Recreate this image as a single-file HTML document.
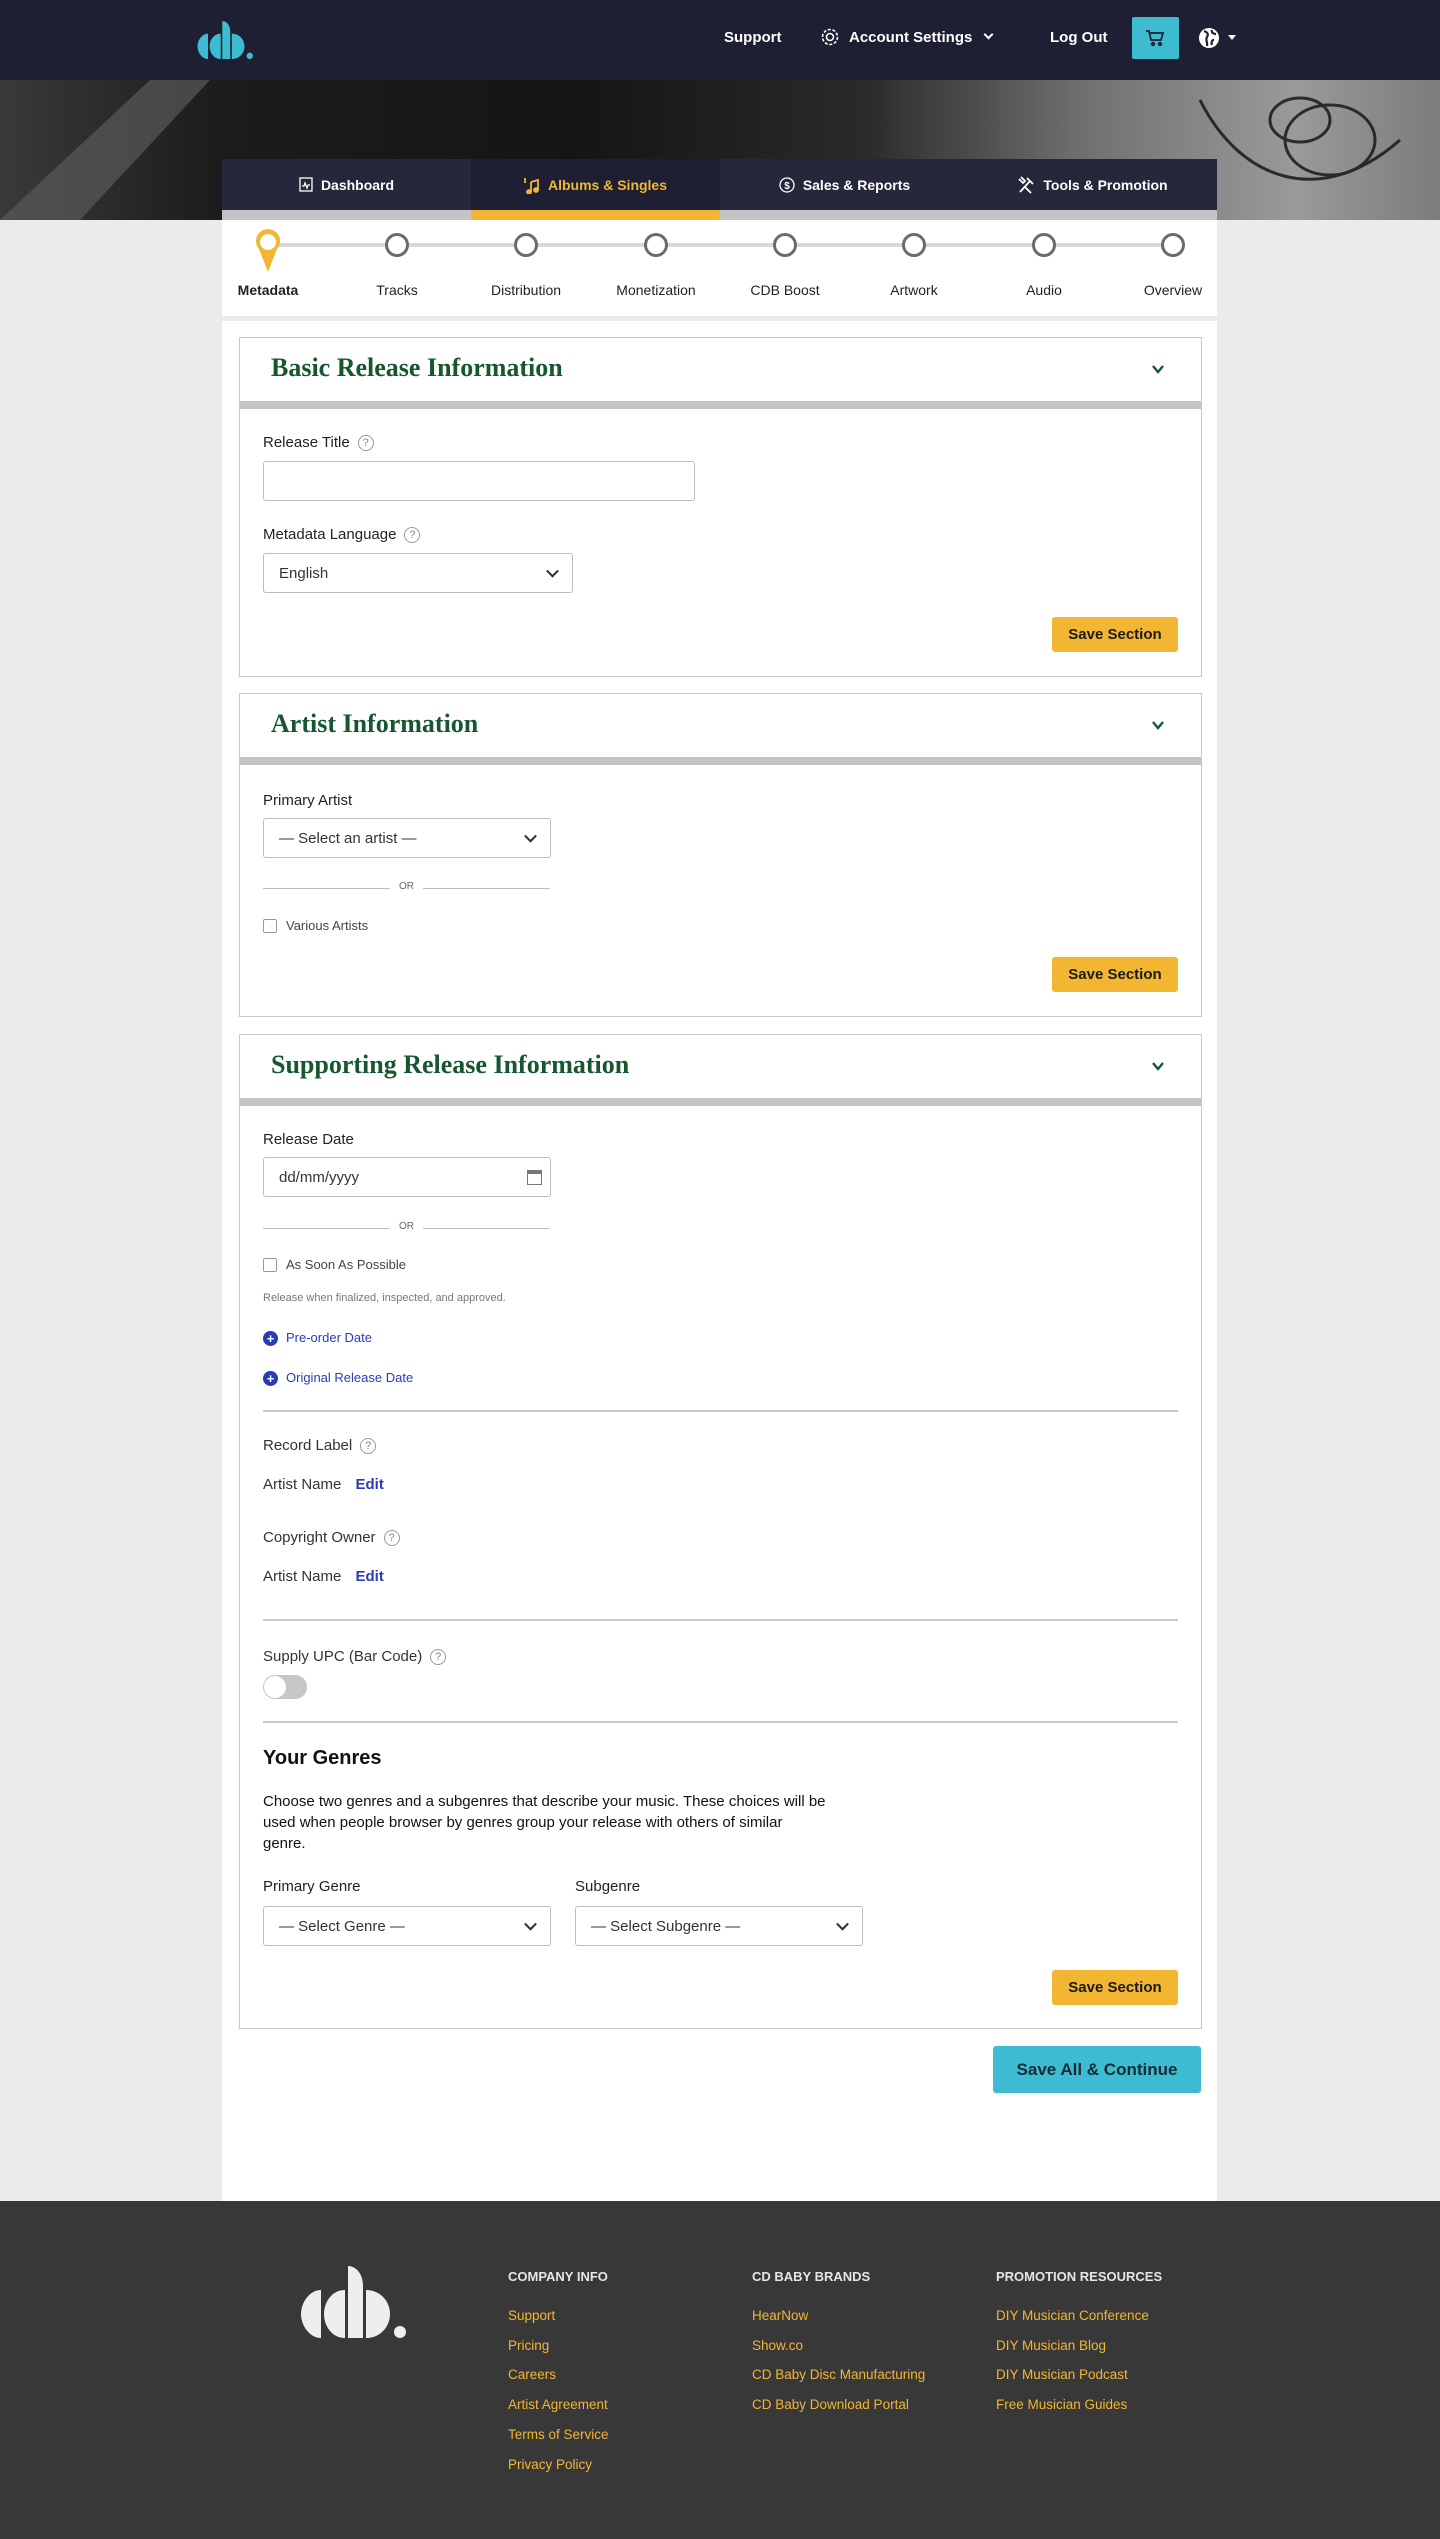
<!DOCTYPE html>
<html><head><meta charset="utf-8">
<style>
*{box-sizing:border-box;margin:0;padding:0}
body{width:1440px;height:2539px;position:relative;background:#ebebeb;font-family:"Liberation Sans",Arial,sans-serif;color:#222;overflow:hidden}
.a{position:absolute}
.hdr{left:0;top:0;width:1440px;height:80px;background:#1f1f33}
.nav{color:#fff;font-size:15px;font-weight:bold;top:29px}
.hero{left:0;top:80px;width:1440px;height:140px;background:linear-gradient(90deg,#3a3a3a 0%,#1c1c1c 15%,#151515 40%,#2a2a2a 60%,#6f6f6f 75%,#9a9a9a 90%,#7c7c7c 100%)}
.tabs{left:222px;top:159px;width:995px;height:51px;background:#27273b}
.tab{position:absolute;top:159px;height:51px;width:249px;color:#fff;font-size:14px;font-weight:bold;display:flex;align-items:center;justify-content:center;gap:8px}
.strip{left:222px;top:210px;width:995px;height:10px;background:#c4c4c4}
.main{left:222px;top:220px;width:995px;height:1981px;background:#fff}
.sep{left:222px;top:316px;width:995px;height:5px;background:#ebebeb}
.stl{top:282px;font-size:14px;width:100px;text-align:center;color:#222}
.circ{width:24px;height:24px;border:3px solid #6b6b6b;border-radius:50%;background:#fff;top:233px}
.box{left:239px;width:963px;border:1px solid #c8c8c8;background:#fff}
.ttl{font-family:"Liberation Serif",Georgia,serif;font-weight:bold;color:#17572f;font-size:26px;left:31px}
.gbar{left:0;width:961px;height:8px;background:#c4c4c4}
.chev{right:36px;width:14px;height:14px}
.lbl{font-size:15px;color:#222}
.q{display:inline-block;width:16px;height:16px;border:1px solid #999;border-radius:50%;font-size:11px;color:#888;text-align:center;line-height:14px;margin-left:8px;vertical-align:1px}
.inp{border:1px solid #bdbdbd;border-radius:3px;background:#fff;font-size:15px;color:#333;padding-left:15px;display:flex;align-items:center}
.sel:after{content:"";position:absolute;right:15px;top:50%;width:7px;height:7px;border-right:2px solid #333;border-bottom:2px solid #333;transform:translateY(-70%) rotate(45deg)}
.btn{background:#f2b632;border-radius:3px;font-size:15px;font-weight:bold;color:#1a1a1a;display:flex;align-items:center;justify-content:center;width:126px;height:35px}
.or{width:287px;height:14px}
.or:before{content:"";position:absolute;left:0;top:7px;width:127px;height:1px;background:#bbb}
.or:after{content:"";position:absolute;right:0;top:7px;width:127px;height:1px;background:#bbb}
.or span{position:absolute;left:131px;width:25px;text-align:center;font-size:10px;color:#666;top:0}
.cb{width:14px;height:14px;border:1px solid #999;border-radius:2px}
.hr{left:23px;width:915px;height:2px;background:#c8c8c8}
.blue{color:#2b3bb8}
.plus{display:inline-block;width:15px;height:15px;border-radius:50%;background:#2b3bb8;color:#fff;font-size:13px;line-height:15px;text-align:center;font-weight:bold;vertical-align:-1px;margin-right:8px}
.ftr{left:0;top:2201px;width:1440px;height:338px;background:#383838}
.fh{color:#e6e6e6;font-size:13px;font-weight:bold;top:2269px}
.fl{color:#f2b632;font-size:13.5px}
</style></head><body>
<div class="a hdr"></div>
<svg class="a" style="left:196px;top:21px" width="60" height="38" viewBox="0 0 108 72"><g fill="#3dbcd1"><path d="M20 24C9 24 0 36 0 48s9 24 20 24z"/><path d="M44 24C31 24 23 36 23 48s8 24 21 24z"/><path d="M47 0c8 0 15 8 15 20v52H47z"/><path d="M65 24c14 0 24 11 24 24s-10 24-24 24z"/><circle cx="99" cy="66" r="6"/></g></svg>
<div class="a nav" style="left:724px">Support</div>
<svg class="a" style="left:820px;top:27px" width="20" height="20" viewBox="0 0 20 20"><circle cx="10" cy="10" r="3.5" fill="none" stroke="#fff" stroke-width="1.6"/><circle cx="10" cy="10" r="7.5" fill="none" stroke="#fff" stroke-width="1.6" stroke-dasharray="3 1.7"/></svg>
<div class="a nav" style="left:849px">Account Settings</div>
<div class="a" style="left:985px;top:31px;width:7px;height:7px;border-right:2px solid #fff;border-bottom:2px solid #fff;transform:rotate(45deg)"></div>
<div class="a nav" style="left:1050px">Log Out</div>
<div class="a" style="left:1132px;top:17px;width:47px;height:42px;background:#3dbcd1;border-radius:2px"></div>
<svg class="a" style="left:1145px;top:28px" width="20" height="20" viewBox="0 0 20 20" fill="none" stroke="#1f1f33" stroke-width="1.8"><path d="M1 3h3l2 9h10l2-7H5"/><circle cx="8" cy="16" r="1.3"/><circle cx="15" cy="16" r="1.3"/></svg>
<svg class="a" style="left:1198px;top:27px" width="22" height="22" viewBox="0 0 22 22"><circle cx="11" cy="11" r="10" fill="#fff"/><path d="M6 4c3 1 5 3 3 6s1 5 0 9M14 3c-1 3 2 4 4 4M16 13c-2 0-3 2-2 5" stroke="#1f1f33" stroke-width="2.2" fill="none"/></svg>
<div class="a" style="left:1228px;top:35px;border-left:4px solid transparent;border-right:4px solid transparent;border-top:5px solid #fff"></div>

<div class="a hero"></div>
<svg class="a" style="left:0;top:80px" width="1440" height="140"><g fill="none" stroke="#111" stroke-width="3" opacity=".8"><ellipse cx="1330" cy="60" rx="45" ry="35"/><ellipse cx="1300" cy="40" rx="30" ry="22"/><path d="M1200 20c40 80 120 110 200 40"/></g><path d="M0 140L150 0h60L80 140z" fill="#5a5a5a" opacity=".7"/></svg>
<div class="a tabs"></div>
<div class="a" style="left:471px;top:159px;width:249px;height:51px;background:#1f1f33"></div>
<div class="tab" style="left:222px"><svg width="14" height="15" viewBox="0 0 14 15" fill="none" stroke="#fff" stroke-width="1.3"><rect x="1" y="1" width="12" height="13"/><path d="M3 9l2 0 1-3 2 5 1-3h2"/></svg>Dashboard</div>
<div class="tab" style="left:471px;color:#f2b632"><svg width="16" height="18" viewBox="0 0 16 18" fill="none" stroke="#f2b632" stroke-width="1.8"><path d="M1 2v5M7 6l7-2v10M7 6v10"/><circle cx="5" cy="16" r="2" fill="#f2b632"/><circle cx="12" cy="14" r="2" fill="#f2b632"/></svg>Albums &amp; Singles</div>
<div class="tab" style="left:720px"><svg width="16" height="16" viewBox="0 0 16 16"><circle cx="8" cy="8" r="7" fill="none" stroke="#fff" stroke-width="1.3"/><text x="8" y="12" font-size="10" fill="#fff" text-anchor="middle" font-family="Liberation Sans">$</text></svg>Sales &amp; Reports</div>
<div class="tab" style="left:968px"><svg width="18" height="18" viewBox="0 0 18 18" fill="none" stroke="#fff" stroke-width="1.8"><path d="M3 16L13 5M10 2l6 6M2 3l4 4 2-2-4-4M8 11l6 6"/></svg>Tools &amp; Promotion</div>
<div class="a strip"></div>
<div class="a" style="left:471px;top:210px;width:249px;height:10px;background:#f2b632"></div>

<div class="a main"></div>
<div class="a" style="left:268px;top:243px;width:905px;height:4px;background:#d9d9d9"></div>
<svg class="a" style="left:254px;top:229px" width="28" height="44" viewBox="0 0 28 44"><path d="M14 43L5 20A12 12 0 1 1 23 20Z" fill="#f2b632"/><circle cx="14" cy="13" r="8" fill="#fff"/></svg>
<div class="a circ" style="left:385px"></div><div class="a circ" style="left:514px"></div><div class="a circ" style="left:644px"></div><div class="a circ" style="left:773px"></div><div class="a circ" style="left:902px"></div><div class="a circ" style="left:1032px"></div><div class="a circ" style="left:1161px"></div>
<div class="a stl" style="left:218px;font-weight:bold">Metadata</div>
<div class="a stl" style="left:347px">Tracks</div>
<div class="a stl" style="left:476px">Distribution</div>
<div class="a stl" style="left:606px">Monetization</div>
<div class="a stl" style="left:735px">CDB Boost</div>
<div class="a stl" style="left:864px">Artwork</div>
<div class="a stl" style="left:994px">Audio</div>
<div class="a stl" style="left:1123px">Overview</div>
<div class="a sep"></div>

<!-- Section 1 -->
<div class="a box" style="top:337px;height:340px">
 <div class="a ttl" style="top:15px">Basic Release Information</div>
 <svg class="a chev" style="top:24px" viewBox="0 0 14 14"><path d="M2 4l5 6 5-6" fill="none" stroke="#17572f" stroke-width="2.4"/></svg>
 <div class="a gbar" style="top:63px"></div>
 <div class="a lbl" style="left:23px;top:96px">Release Title<span class="q">?</span></div>
 <div class="a inp" style="left:23px;top:123px;width:432px;height:40px"></div>
 <div class="a lbl" style="left:23px;top:188px">Metadata Language<span class="q">?</span></div>
 <div class="a inp sel" style="left:23px;top:215px;width:310px;height:40px">English</div>
 <div class="a btn" style="left:812px;top:279px">Save Section</div>
</div>

<!-- Section 2 -->
<div class="a box" style="top:693px;height:324px">
 <div class="a ttl" style="top:15px">Artist Information</div>
 <svg class="a chev" style="top:24px" viewBox="0 0 14 14"><path d="M2 4l5 6 5-6" fill="none" stroke="#17572f" stroke-width="2.4"/></svg>
 <div class="a gbar" style="top:63px"></div>
 <div class="a lbl" style="left:23px;top:98px">Primary Artist</div>
 <div class="a inp sel" style="left:23px;top:124px;width:288px;height:40px">— Select an artist —</div>
 <div class="a or" style="left:23px;top:187px"><span>OR</span></div>
 <div class="a cb" style="left:23px;top:225px"></div>
 <div class="a" style="left:46px;top:224px;font-size:13px;color:#444">Various Artists</div>
 <div class="a btn" style="left:812px;top:263px">Save Section</div>
</div>

<!-- Section 3 -->
<div class="a box" style="top:1034px;height:995px">
 <div class="a ttl" style="top:15px">Supporting Release Information</div>
 <svg class="a chev" style="top:24px" viewBox="0 0 14 14"><path d="M2 4l5 6 5-6" fill="none" stroke="#17572f" stroke-width="2.4"/></svg>
 <div class="a gbar" style="top:63px"></div>
 <div class="a lbl" style="left:23px;top:96px">Release Date</div>
 <div class="a inp" style="left:23px;top:122px;width:288px;height:40px">dd/mm/yyyy</div>
 <div class="a" style="left:287px;top:135px;width:15px;height:15px;border:1.5px solid #777;border-top:4px solid #777"></div>
 <div class="a or" style="left:23px;top:186px"><span>OR</span></div>
 <div class="a cb" style="left:23px;top:223px"></div>
 <div class="a" style="left:46px;top:222px;font-size:13px;color:#444">As Soon As Possible</div>
 <div class="a" style="left:23px;top:257px;font-size:11px;color:#777">Release when finalized, inspected, and approved.</div>
 <div class="a blue" style="left:23px;top:295px;font-size:13px"><span class="plus">+</span>Pre-order Date</div>
 <div class="a blue" style="left:23px;top:335px;font-size:13px"><span class="plus">+</span>Original Release Date</div>
 <div class="a hr" style="top:375px"></div>
 <div class="a lbl" style="left:23px;top:402px;color:#333">Record Label<span class="q">?</span></div>
 <div class="a lbl" style="left:23px;top:441px;color:#333">Artist Name <b class="blue" style="margin-left:10px">Edit</b></div>
 <div class="a lbl" style="left:23px;top:494px;color:#333">Copyright Owner<span class="q">?</span></div>
 <div class="a lbl" style="left:23px;top:533px;color:#333">Artist Name <b class="blue" style="margin-left:10px">Edit</b></div>
 <div class="a hr" style="top:584px"></div>
 <div class="a lbl" style="left:23px;top:613px;color:#333">Supply UPC (Bar Code)<span class="q">?</span></div>
 <div class="a" style="left:23px;top:640px;width:44px;height:24px;border-radius:12px;background:#c6c6c6"></div>
 <div class="a" style="left:24px;top:641px;width:22px;height:22px;border-radius:50%;background:#fff"></div>
 <div class="a hr" style="top:686px"></div>
 <div class="a" style="left:23px;top:712px;font-size:20px;font-weight:bold;color:#111">Your Genres</div>
 <div class="a" style="left:23px;top:756px;white-space:nowrap;font-size:15px;line-height:21px;color:#111">Choose two genres and a subgenres that describe your music. These choices will be<br>used when people browser by genres group your release with others of similar<br>genre.</div>
 <div class="a lbl" style="left:23px;top:843px">Primary Genre</div>
 <div class="a lbl" style="left:335px;top:843px">Subgenre</div>
 <div class="a inp sel" style="left:23px;top:871px;width:288px;height:40px">— Select Genre —</div>
 <div class="a inp sel" style="left:335px;top:871px;width:288px;height:40px">— Select Subgenre —</div>
 <div class="a btn" style="left:812px;top:935px">Save Section</div>
</div>
<div class="a" style="left:993px;top:2046px;width:208px;height:47px;background:#3dbcd1;border-radius:3px;font-size:17px;font-weight:bold;color:#1a2a35;display:flex;align-items:center;justify-content:center">Save All &amp; Continue</div>

<!-- Footer -->
<div class="a ftr"></div>
<svg class="a" style="left:301px;top:2266px" width="108" height="72" viewBox="0 0 108 72"><g fill="#eee"><path d="M20 24C9 24 0 36 0 48s9 24 20 24z"/><path d="M44 24C31 24 23 36 23 48s8 24 21 24z"/><path d="M47 0c8 0 15 8 15 20v52H47z"/><path d="M65 24c14 0 24 11 24 24s-10 24-24 24z"/><circle cx="99" cy="66" r="6"/></g></svg>
<div class="a fh" style="left:508px">COMPANY INFO</div>
<div class="a fh" style="left:752px">CD BABY BRANDS</div>
<div class="a fh" style="left:996px">PROMOTION RESOURCES</div>
<div class="a fl" style="left:508px;top:2308px">Support</div>
<div class="a fl" style="left:508px;top:2338px">Pricing</div>
<div class="a fl" style="left:508px;top:2367px">Careers</div>
<div class="a fl" style="left:508px;top:2397px">Artist Agreement</div>
<div class="a fl" style="left:508px;top:2427px">Terms of Service</div>
<div class="a fl" style="left:508px;top:2457px">Privacy Policy</div>
<div class="a fl" style="left:752px;top:2308px">HearNow</div>
<div class="a fl" style="left:752px;top:2338px">Show.co</div>
<div class="a fl" style="left:752px;top:2367px">CD Baby Disc Manufacturing</div>
<div class="a fl" style="left:752px;top:2397px">CD Baby Download Portal</div>
<div class="a fl" style="left:996px;top:2308px">DIY Musician Conference</div>
<div class="a fl" style="left:996px;top:2338px">DIY Musician Blog</div>
<div class="a fl" style="left:996px;top:2367px">DIY Musician Podcast</div>
<div class="a fl" style="left:996px;top:2397px">Free Musician Guides</div>
</body></html>
